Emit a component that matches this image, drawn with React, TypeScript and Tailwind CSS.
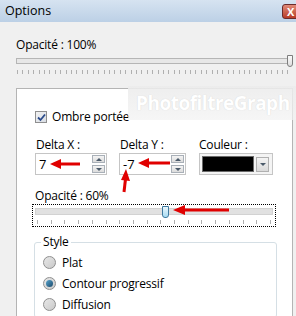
import React from "react";

const font = { fontFamily: '"Open Sans", "Noto Sans", sans-serif' };

const SpinBox = ({ value, width }: { value: string; width: string }) => (
  <div className={`relative h-[22px] ${width} bg-white border border-[#c5c5c5] flex items-center`}>
    <span className="pl-[3px] text-[13px] leading-none text-black">{value}</span>
    <div className="absolute right-[1px] top-[1px] flex flex-col gap-[2px]">
      <div className="w-[13px] h-[8px] border border-[#a9b0b8] bg-gradient-to-b from-[#f4f4f4] to-[#dcdcdc] flex items-center justify-center">
        <div className="w-0 h-0 border-l-[3px] border-r-[3px] border-b-[3px] border-l-transparent border-r-transparent border-b-[#4a5a6a]" />
      </div>
      <div className="w-[13px] h-[8px] border border-[#a9b0b8] bg-gradient-to-b from-[#f4f4f4] to-[#dcdcdc] flex items-center justify-center">
        <div className="w-0 h-0 border-l-[3px] border-r-[3px] border-t-[3px] border-l-transparent border-r-transparent border-t-[#4a5a6a]" />
      </div>
    </div>
  </div>
);

const Radio = ({ label, checked }: { label: string; checked?: boolean }) => (
  <div className="flex items-center gap-[6px] h-[21px]">
    <div className="w-[13px] h-[13px] rounded-full border border-[#8f8f8f] bg-gradient-to-br from-[#e8e8e8] to-[#c9c9c9] flex items-center justify-center">
      {checked && <div className="w-[7px] h-[7px] rounded-full bg-gradient-to-br from-[#5aa6d0] to-[#1a4a6a]" />}
    </div>
    <span className="text-[12px] tracking-[-0.2px] text-black">{label}</span>
  </div>
);

export default function App() {
  const topTicks = Array.from({ length: 51 });
  const bottomTicks = Array.from({ length: 18 });

  return (
    <div className="relative w-[296px] h-[316px] overflow-hidden bg-[#f0f0f0] text-black" style={font}>
      {/* title bar */}
      <div className="h-[22px] bg-gradient-to-b from-[#d6e3f1] to-[#bcd0e6] flex items-center pl-[5px] relative">
        <span className="text-[12.5px]">Options</span>
        <div className="absolute left-[282px] top-[4px] w-[20px] h-[15px] rounded-[3px] border border-[#6b2b2b] bg-gradient-to-b from-[#e08a78] to-[#b83a26] flex items-center pl-[4px]">
          <span className="text-white text-[11px] font-bold leading-none">X</span>
        </div>
      </div>

      {/* body */}
      <div className="pt-[15px] pl-[16px] pr-[3px]">
        <div className="text-[12px] tracking-[-0.2px] leading-[16px]">Opacité : 100%</div>
        <div className="relative mt-[4px] h-[10px]">
          <div className="absolute left-0 right-[1px] top-[1px] h-[6px] border border-[#b5b5b5] bg-[#e7e7e7]" />
          <div className="absolute right-0 top-[-2px] w-[6px] h-[12px] rounded-b-[3px] border border-[#7d7d7d] bg-gradient-to-b from-[#fafafa] to-[#dedede]" />
        </div>
        <div className="flex justify-between pl-[1px] pr-[4px] mt-[3px] h-[5px]">
          {topTicks.map((_, i) => (
            <div key={i} className="w-[1px] h-[4px] bg-[#b0b0b0]" />
          ))}
        </div>

        {/* panel */}
        <div className="mt-[13px] w-[277px] h-[240px] bg-white border border-[#b4b4b4] pt-[19px] pl-[18px]">
          <div className="flex items-center gap-[5px] h-[18px]">
            <div className="w-[12px] h-[12px] border border-[#8f8f8f] bg-gradient-to-br from-[#f2f2f2] to-[#d8dde4] flex items-center justify-center">
              <svg width="9" height="9" viewBox="0 0 9 9">
                <path d="M1 4.5 L3.5 7 L8 1.5" stroke="#2a4a8a" strokeWidth="1.8" fill="none" />
              </svg>
            </div>
            <span className="text-[12px] tracking-[-0.2px]">Ombre portée</span>
          </div>

          <div className="flex mt-[11px]">
            <div className="flex flex-col">
              <span className="text-[12px] tracking-[-0.2px] leading-[16px] pl-[1px]">Delta X :</span>
              <SpinBox value="7" width="w-[72px]" />
            </div>
            <div className="flex flex-col ml-[12px]">
              <span className="text-[12px] tracking-[-0.2px] leading-[16px] pl-[1px]">Delta Y :</span>
              <SpinBox value="-7" width="w-[67px]" />
            </div>
            <div className="flex flex-col ml-[13px]">
              <span className="text-[12px] tracking-[-0.2px] leading-[16px]">Couleur :</span>
              <div className="h-[22px] w-[74px] border border-[#c5c5c5] bg-[#f4f4f4] flex items-center pl-[2px] gap-[2px]">
                <div className="w-[52px] h-[16px] bg-black border border-[#6a6a6a]" />
                <div className="w-[13px] h-[15px] border border-[#b0b0b0] bg-gradient-to-b from-[#f4f4f4] to-[#dadada] flex items-center justify-center">
                  <div className="w-0 h-0 border-l-[3px] border-r-[3px] border-t-[3px] border-l-transparent border-r-transparent border-t-[#4a5a6a]" />
                </div>
              </div>
            </div>
          </div>

          <div className="text-[12px] tracking-[-0.2px] leading-[16px] mt-[13px]">Opacité : 60%</div>
          <div className="ml-[-3px] w-[244px] h-[23px] border border-dotted border-black px-[2px] pt-[2px]">
            <div className="relative h-[9px]">
              <div className="absolute left-0 right-0 top-[1px] h-[7px] bg-[#e1e1e1] border border-[#d2d2d2]" />
              <div className="absolute left-[127px] top-[-1px] w-[7px] h-[12px] rounded-b-[3px] border border-[#3f7aa0] bg-gradient-to-b from-[#e8f6fd] to-[#a8dcf2]" />
            </div>
            <div className="flex justify-between px-[2px] mt-[4px]">
              {bottomTicks.map((_, i) => (
                <div key={i} className="w-[1px] h-[4px] bg-[#b0b0b0]" />
              ))}
            </div>
          </div>

          {/* style group */}
          <div className="relative mt-[15px] ml-[-1px] w-[243px] h-[76px] border border-[#d5dfe5] rounded-[3px] pt-[9px] pl-[8px]">
            <span className="absolute left-[6px] top-[-9px] bg-white px-[2px] text-[12px] tracking-[-0.2px] leading-[16px]">Style</span>
            <Radio label="Plat" />
            <Radio label="Contour progressif" checked />
            <Radio label="Diffusion" />
          </div>
        </div>
      </div>

      {/* watermark */}
      <div className="absolute left-[128px] top-[86px] w-[168px] h-[34px] bg-gradient-to-b from-[#ececec]/90 to-[#f2f2f2]/70 flex items-center pl-[8px] overflow-hidden">
        <span className="text-white font-bold text-[19px] tracking-[-0.5px] whitespace-nowrap" style={{ textShadow: "0 0 1px #cfcfcf" }}>
          PhotofiltreGraph
        </span>
      </div>

      {/* red arrows */}
      <svg className="absolute left-0 top-0 pointer-events-none" width="296" height="316">
        <g fill="#e00000" stroke="#e00000">
          <line x1="60" y1="164" x2="80" y2="164" strokeWidth="3" />
          <polygon points="50,164 61,159 61,169" strokeWidth="0" />
          <line x1="148" y1="163" x2="170" y2="163" strokeWidth="3" />
          <polygon points="138,163 149,158 149,168" strokeWidth="0" />
          <line x1="124" y1="192" x2="125.5" y2="179" strokeWidth="3" />
          <polygon points="126,169 121,180 130,181" strokeWidth="0" />
          <line x1="184" y1="210" x2="229" y2="210" strokeWidth="3" />
          <polygon points="173,210 185,205 185,215" strokeWidth="0" />
        </g>
      </svg>
    </div>
  );
}
